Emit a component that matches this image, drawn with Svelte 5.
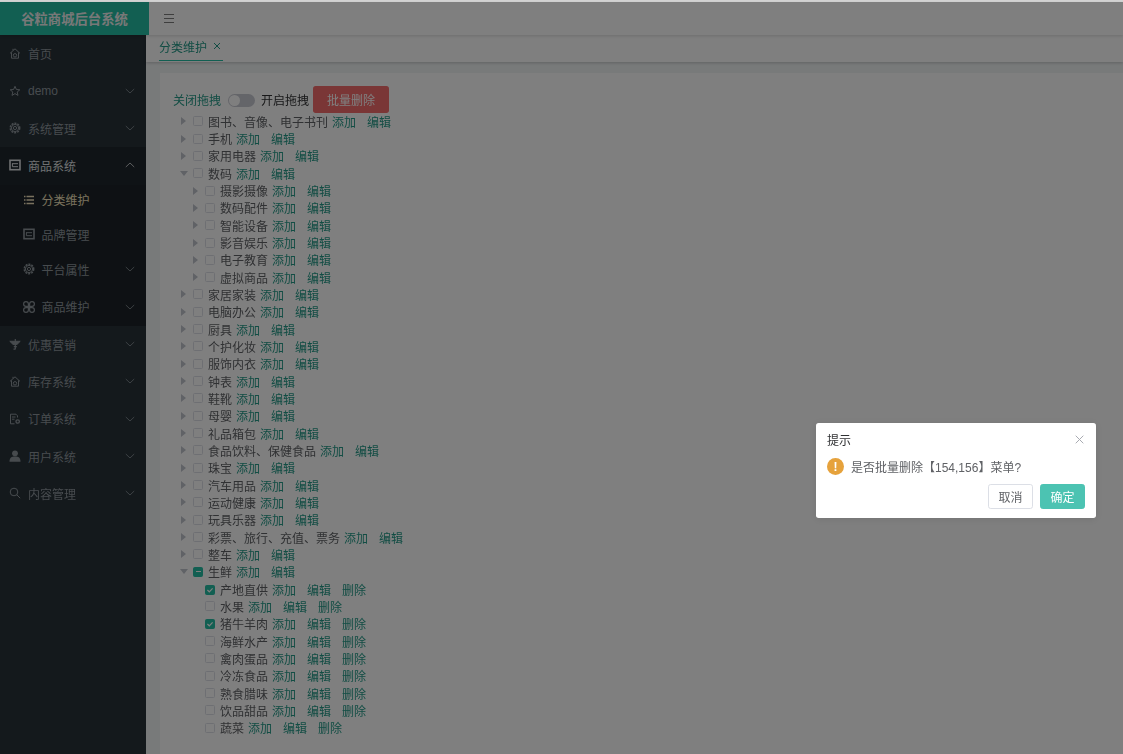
<script>
  const menu = [
    { t: '首页', i: 'home' },
    { t: 'demo', i: 'star', c: 'down' },
    { t: '系统管理', i: 'gear', c: 'down' },
    { t: '商品系统', i: 'panel', c: 'up', open: true },
    { t: '分类维护', i: 'list', sub: true, active: true },
    { t: '品牌管理', i: 'panel', sub: true },
    { t: '平台属性', i: 'gear', sub: true, tall: true, c: 'down' },
    { t: '商品维护', i: 'clover', sub: true, tall: true, c: 'down' },
    { t: '优惠营销', i: 'tree', c: 'down' },
    { t: '库存系统', i: 'home', c: 'down' },
    { t: '订单系统', i: 'doc', c: 'down' },
    { t: '用户系统', i: 'user', c: 'down' },
    { t: '内容管理', i: 'search', c: 'down' }
  ];
  const N = (t, l = 0, o = {}) => ({ t, l, ...o });
  const tree = [
    N('图书、音像、电子书刊'), N('手机'), N('家用电器'), N('数码', 0, { open: true }),
    N('摄影摄像', 1), N('数码配件', 1), N('智能设备', 1), N('影音娱乐', 1), N('电子教育', 1), N('虚拟商品', 1),
    N('家居家装'), N('电脑办公'), N('厨具'), N('个护化妆'), N('服饰内衣'), N('钟表'), N('鞋靴'), N('母婴'),
    N('礼品箱包'), N('食品饮料、保健食品'), N('珠宝'), N('汽车用品'), N('运动健康'), N('玩具乐器'),
    N('彩票、旅行、充值、票务'), N('整车'), N('生鲜', 0, { open: true, mixed: true }),
    N('产地直供', 1, { leaf: true, on: true }), N('水果', 1, { leaf: true }), N('猪牛羊肉', 1, { leaf: true, on: true }),
    N('海鲜水产', 1, { leaf: true }), N('禽肉蛋品', 1, { leaf: true }), N('冷冻食品', 1, { leaf: true }),
    N('熟食腊味', 1, { leaf: true }), N('饮品甜品', 1, { leaf: true }), N('蔬菜', 1, { leaf: true })
  ];
</script>

{#snippet icon(name)}
  <svg class="ic" viewBox="0 0 12 12" fill="none" stroke="currentColor" stroke-width="1">
    {#if name === 'home'}
      <path d="M1 6.400 6 1.800l5 4.600M2.500 5.400v5.800h7V5.400M4 1.800v1.500" /><circle cx="6" cy="8.300" r="1.700" />
    {:else if name === 'star'}
      <path d="M6 1.300 7.400 4.500l3.400.3-2.600 2.200.8 3.400L6 8.600l-3 1.800.8-3.400L1.200 4.800l3.400-.3z" />
    {:else if name === 'gear'}
      <circle cx="6" cy="6" r="4.700" stroke-width="1.500" stroke-dasharray="2 1" /><circle cx="6" cy="6" r="3.600" /><circle cx="6" cy="6" r="1.600" />
    {:else if name === 'panel'}
      <rect x="1" y="1.300" width="10" height="9.400" stroke-width="1.600" /><path d="M3 4.700h6M3.400 4.700v3h5.600" />
    {:else if name === 'list'}
      <path d="M3.500 2.500H11M3.500 6H11M3.500 9.500H11M1 2.500h1.500M1 6h1.500M1 9.500h1.500" stroke-width="1.400" />
    {:else if name === 'clover'}
      <path d="M5.400 5.400H3a2.400 2.400 0 1 1 2.400-2.400zM6.600 5.400V3A2.400 2.400 0 1 1 9 5.400zM5.400 6.600V9A2.400 2.400 0 1 1 3 6.600zM6.600 6.600H9A2.400 2.400 0 1 1 6.600 9z" stroke-width="1.200" />
    {:else if name === 'tree'}
      <path d="M.8 3.300h10.400L8 6.400H4z" fill="currentColor" /><path d="M6.300 1v10.200M4.800 8.700h3M4.500 11.200h2" stroke-width="1.200" />
    {:else if name === 'doc'}
      <path d="M8.500 4.500V2.800L7 1.200H1.500v9.600h4M3 4h3.500M3 6.200h2.500" /><circle cx="8.700" cy="8.500" r="1.700" stroke-width="1.300" />
    {:else if name === 'user'}
      <circle cx="6" cy="3.300" r="2.900" fill="currentColor" stroke="none" /><path d="M.5 11.800c0-4 2-5.200 5.500-5.200s5.500 1.200 5.500 5.200z" fill="currentColor" stroke="none" />
    {:else if name === 'search'}
      <circle cx="5" cy="5" r="3.800" /><path d="m7.800 7.800 3.400 3.400" />
    {/if}
  </svg>
{/snippet}

<div class="page">
  <header class="top">
    <div class="brand">谷粒商城后台系统</div>
    <div class="bar">
      <svg class="burger" viewBox="0 0 10 9" stroke="currentColor" stroke-width="1"><path d="M0 .5h10M0 4.500h10M0 8.500h10" /></svg>
    </div>
  </header>
  <div class="body">
    <nav class="side">
      {#each menu as m}
        <div class="mi" class:sub={m.sub} class:tall={m.tall} class:open={m.open} class:active={m.active}>
          {@render icon(m.i)}
          <span class="mt">{m.t}</span>
          {#if m.c}
            <svg class="chev" viewBox="0 0 10 6" fill="none" stroke="currentColor"><path d={m.c === 'up' ? 'M.8 5 5 1l4.200 4' : 'M.8 1 5 5l4.200-4'} /></svg>
          {/if}
        </div>
      {/each}
    </nav>
    <main class="main">
      <div class="tabs">
        <div class="tab">分类维护<svg class="x" viewBox="0 0 8 8" fill="none" stroke="currentColor"><path d="m1 1 6 6M7 1 1 7" /></svg></div>
      </div>
      <section class="card">
        <div class="tools">
          <span class="off">关闭拖拽</span>
          <span class="switch"><i></i></span>
          <span class="on">开启拖拽</span>
          <button class="del">批量删除</button>
        </div>
        <div class="tree">
          {#each tree as n}
            <div class="row" class:l1={n.l === 1}>
              <span class="arrow" class:down={n.open} class:leaf={n.leaf}></span>
              <span class="cb" class:on={n.on} class:mixed={n.mixed}>
                {#if n.on}<svg viewBox="0 0 10 10" fill="none" stroke="#fff" stroke-width="1.200"><path d="M2.400 5 4.300 6.800 7.600 3.300" /></svg>{/if}
              </span>
              <span class="label">{n.t}</span>
              <span class="act">添加</span>
              <span class="act gap">编辑</span>
              {#if n.leaf}<span class="act gap">删除</span>{/if}
            </div>
          {/each}
        </div>
      </section>
    </main>
  </div>
  <div class="mask"></div>
  <div class="box" role="dialog">
    <div class="bh"><span>提示</span>
      <svg class="close" viewBox="0 0 9 9" stroke="#a8abb2"><path d="m.7.7 7.600 7.600M8.300.7.7 8.300" /></svg>
    </div>
    <div class="bc"><span class="warn">!</span><span>是否批量删除【154,156】菜单?</span></div>
    <div class="bf">
      <button class="b">取消</button>
      <button class="b pri">确定</button>
    </div>
  </div>
</div>

<style>
  :global(body) {
    margin: 0;
    font-family: "Liberation Sans", "Noto Sans CJK SC", sans-serif;
    font-size: 12px;
    background: #d4d4d4;
  }
  .page { position: relative; width: 1123px; height: 754px; overflow: hidden; padding-top: 2px; box-sizing: border-box; filter: blur(.3px); }
  .top { display: flex; height: 33.330px; background: #fff; box-shadow: 0 1px 3px rgba(0,0,0,.15); position: relative; }
  .brand { width: 149px; background: #24bea4; color: #f0f0f0; font-size: 13.330px; font-weight: 700; display: flex; align-items: center; justify-content: center; }
  .bar { display: flex; align-items: center; padding-left: 15px; color: #7d7d7d; }
  .burger { width: 10px; height: 9px; }
  .body { display: flex; height: 718.670px; background: #f1f4f5; }
  .side { width: 146px; background: #283239; color: #8f979d; flex: none; }
  .mi { height: 37.330px; display: flex; align-items: center; padding: 0 0 1px 9px; box-sizing: border-box; gap: 7px; }
  .mi.open { color: #dfe1e3; background: #1f272d; }
  .mi.sub { height: 33.330px; padding-left: 23px; background: #1c2328; gap: 6.500px; }
  .mi.tall { height: 37.330px; }
  .mi.active { color: #f2e2bd; padding-bottom: 3px; }
  .ic { width: 12px; height: 12px; flex: none; }
  .chev { width: 10px; height: 6px; margin-left: auto; margin-right: 11px; opacity: .8; }
  .main { flex: 1; min-width: 0; }
  .tabs { height: 26.670px; background: #fff; box-shadow: 0 1px 3px rgba(0,0,0,.2); padding-left: 13px; }
  .tab { display: flex; align-items: center; gap: 6px; height: 25.670px; padding-bottom: 3px; box-sizing: border-box; width: 64px; border-bottom: 1px solid #24bea4; color: #249a88; }
  .x { width: 8px; height: 8px; }
  .card { margin: 10.670px 0 0 14px; background: #fff; padding: 13px 0 0 13px; height: 700px; }
  .tools { display: flex; align-items: center; height: 27px; }
  .off { color: #249a88; margin-top: 1px; }
  .on { color: #303133; margin-top: 1px; }
  .switch { width: 27px; height: 13px; margin: 2px 6px 0 7px; border-radius: 7px; background: #c8cad3; position: relative; display: block; }
  .switch i { position: absolute; left: 1px; top: 1px; width: 11px; height: 11px; background: #fff; border-radius: 50%; }
  .del { margin-left: 4px; width: 76px; height: 27px; border: 0; border-radius: 2.700px; background: #f56c6c; color: #fff; font: inherit; padding: 0; }
  .tree { margin-top: -.1px; }
  .row { height: 17.330px; display: flex; align-items: center; color: #606266; padding-left: 7px; }
  .row.l1 { padding-left: 19px; }
  .arrow { width: 0; height: 0; border-left: 5px solid #c0c4cc; border-top: 4px solid transparent; border-bottom: 4px solid transparent; margin: 0 7px 0 1px; }
  .arrow.down { border-top: 5px solid #c0c4cc; border-left: 4px solid transparent; border-right: 4px solid transparent; border-bottom: 0; margin: 0 5px 0 0; }
  .arrow.leaf { border-color: transparent; }
  .cb { width: 10px; height: 10px; border: 1px solid #dcdfe6; box-sizing: border-box; border-radius: 1.500px; background: #fff; margin-right: 5px; position: relative; flex: none; }
  .cb.on, .cb.mixed { background: #24bea4; border-color: #24bea4; }
  .cb svg { position: absolute; inset: -1px; }
  .cb.mixed::after { content: ''; position: absolute; left: 1.500px; right: 1.500px; top: 3px; height: 1.500px; background: #fff; }
  .label { margin-right: 4px; }
  .act { color: #249a88; }
  .gap { margin-left: 11px; }
  .mask { position: absolute; inset: 2px 0 0; background: rgba(0,0,0,.5); }
  .box { position: absolute; left: 816px; top: 423px; width: 280px; height: 95px; background: #fff; border-radius: 2.700px; box-shadow: 0 1px 8px rgba(0,0,0,.1); box-sizing: border-box; padding: 8.500px 11px 0 10px; color: #606266; }
  .bh { display: flex; justify-content: space-between; align-items: center; height: 15px; color: #303133; padding: 0 1px; }
  .close { width: 9px; height: 9px; }
  .bc { display: flex; align-items: center; gap: 7px; margin-top: 11.500px; height: 17px; padding-left: 1px; }
  .warn { width: 17px; height: 17px; border-radius: 50%; background: #e6a23c; color: #fff; font-weight: 700; display: flex; align-items: center; justify-content: center; }
  .bf { display: flex; justify-content: flex-end; gap: 7px; margin-top: 9px; }
  .b { width: 45px; height: 25.330px; border: 1px solid #dcdfe6; border-radius: 2.700px; background: #fff; color: #606266; font: inherit; padding: 0; }
  .pri { background: #4cc3b2; border-color: #4cc3b2; color: #fff; }
</style>
